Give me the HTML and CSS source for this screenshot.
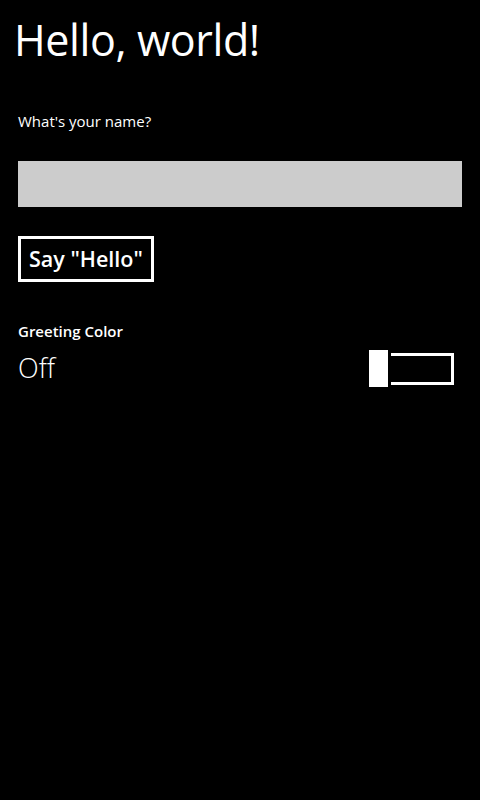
FILE: index.html
```html
<!DOCTYPE html>
<html>
<head>
<meta charset="utf-8">
<link rel="stylesheet" href="styles.css">
</head>
<body>
<div class="page">
  <h1 class="title">Hello, world!</h1>
  <label class="label" for="name">What's your name?</label>
  <input id="name" class="textbox" type="text">
  <button class="btn">Say "Hello"</button>
  <div class="toggle-header">Greeting Color</div>
  <div class="toggle-row">
    <span class="toggle-state">Off</span>
    <div class="switch"><div class="thumb"></div></div>
  </div>
</div>
</body>
</html>
```

FILE: styles.css
```css
html, body {
  margin: 0;
  padding: 0;
  background: #000;
  color: #fff;
  font-family: "Open Sans", "Noto Sans", sans-serif;
}
.page {
  width: 480px;
  height: 800px;
  padding: 0 18px;
  box-sizing: border-box;
  display: flex;
  flex-direction: column;
  align-items: flex-start;
}
.title {
  margin: 12px 0 0 -4px;
  font-size: 43px;
  font-weight: 400;
  line-height: 56px;
  letter-spacing: -0.4px;
}
.label {
  margin-top: 43px;
  font-size: 15px;
  line-height: 20px;
}
.textbox {
  margin: 30px 0 0 0;
  width: 444px;
  height: 46px;
  border: none;
  background: #ccc;
  padding: 0;
  outline: none;
}
.btn {
  margin-top: 29px;
  height: 46px;
  padding: 0 8px;
  border: 3px solid #fff;
  background: #000;
  color: #fff;
  font-family: inherit;
  font-size: 21.5px;
  font-weight: 600;
  line-height: 36px;
}
.toggle-header {
  margin-top: 38px;
  font-size: 15px;
  font-weight: 600;
  line-height: 22px;
}
.toggle-row {
  margin-top: 8px;
  width: 444px;
  display: flex;
  align-items: center;
  justify-content: space-between;
}
.toggle-state {
  font-size: 27px;
  font-weight: 300;
  line-height: 36px;
}
.switch {
  position: relative;
  width: 85px;
  height: 32px;
  box-sizing: border-box;
  border: 3px solid #fff;
  margin: 2px 8px 0 0;
}
.thumb {
  position: absolute;
  left: -3px;
  top: -6px;
  width: 19px;
  height: 37px;
  background: #fff;
  box-shadow: 3px 0 0 0 #000;
}
```
